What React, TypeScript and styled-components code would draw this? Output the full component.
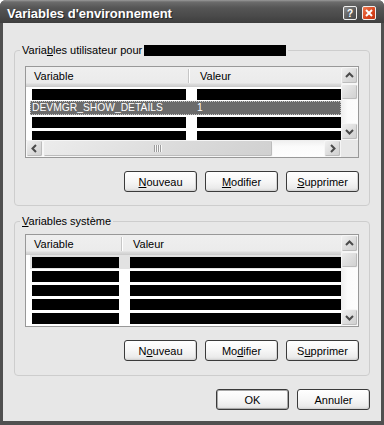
import React, { FC } from 'react';
import styled, { createGlobalStyle } from 'styled-components';

const GlobalStyle = createGlobalStyle`
    html, body {
        margin: 0;
        padding: 0;
        background: #ffffff;
    }
    body {
        font-family: "Liberation Sans", Arial, sans-serif;
        font-size: 11px;
        color: #000000;
    }
`

const Window = styled.div`
    width: 384px;
    height: 425px;
    display: flex;
    flex-direction: column;
    border-radius: 6px 6px 0 0;
    overflow: hidden;
    background: #4f4f4f;
`

const TitleBar = styled.div`
    height: 23px;
    box-sizing: border-box;
    padding: 3px 8px 0 7px;
    display: flex;
    align-items: center;
    gap: 5px;
    background: linear-gradient(to bottom, #9a9a9a 0, #6c6c6c 2px, #555555 8px, #4a4a4a 16px, #3e3e3e 23px);
`

const Title = styled.div`
    flex: 1;
    color: #ffffff;
    font-weight: bold;
    font-size: 13px;
    text-shadow: 1px 1px 0 #262626;
`

const CaptionButton = styled.div<{ $close?: boolean }>`
    width: 14px;
    height: 14px;
    box-sizing: border-box;
    border: 1px solid #f0f0f0;
    border-radius: 2px;
    display: flex;
    align-items: center;
    justify-content: center;
    color: #ffffff;
    font-weight: bold;
    font-size: 10px;
    background: ${p => p.$close
        ? 'linear-gradient(135deg, #f07a50, #d8431c 60%, #c23512)'
        : 'linear-gradient(135deg, #8a8a8a, #5a5a5a 60%, #4a4a4a)'};
`

const Body = styled.div`
    flex: 1;
    background: #e7e7e7;
    border-style: solid;
    border-color: #505050;
    border-width: 0 3px 4px 3px;
    padding-top: 21px;
    display: flex;
    flex-direction: column;
`

const Group = styled.fieldset<{ $top: number; $bottom: number }>`
    margin: 0 11px;
    padding: ${p => p.$top}px 10px ${p => p.$bottom}px 10px;
    border: 1px solid #cdcdcd;
    border-radius: 4px;
    min-width: 0;
    & + & {
        margin-top: 9px;
    }
`

const Legend = styled.legend`
    padding: 0 2px;
    margin-left: -5px;
    height: 13px;
    line-height: 13px;
    white-space: nowrap;
    color: #000000;
`

const Redacted = styled.span`
    display: inline-block;
    width: 142px;
    height: 11px;
    margin-left: 2px;
    vertical-align: -2px;
    background: #000000;
`

const ListView = styled.div<{ $h: number; $hscroll?: boolean }>`
    height: ${p => p.$h}px;
    box-sizing: border-box;
    border: 1px solid #989898;
    background: #ffffff;
    display: grid;
    grid-template-columns: minmax(0, 1fr) 17px;
    grid-template-rows: ${p => p.$hscroll ? 'minmax(0, 1fr) 17px' : 'minmax(0, 1fr)'};
    overflow: hidden;
`

const ListContent = styled.div`
    display: flex;
    flex-direction: column;
    overflow: hidden;
    min-width: 0;
`

const Header = styled.div`
    height: 20px;
    flex-shrink: 0;
    display: flex;
    box-sizing: border-box;
    background: linear-gradient(to bottom, #efefef 0, #ebebeb 16px, #dcdcdc 17px, #d2d2d2 19px, #c8c8c8 20px);
`

const HeaderCell = styled.div<{ $w?: number }>`
    ${p => p.$w ? `width: ${p.$w}px;` : 'flex: 1;'}
    flex-shrink: 0;
    box-sizing: border-box;
    display: flex;
    align-items: center;
    justify-content: space-between;
    padding-left: ${p => p.$w ? 8 : 10}px;
    padding-bottom: 2px;
`

const HeaderSep = styled.span`
    width: 1px;
    height: 14px;
    background: #c6c6c6;
    box-shadow: 1px 0 0 #ffffff;
    margin-right: 1px;
`

const Row = styled.div<{ $sel?: boolean; $inactive?: boolean }>`
    height: 14px;
    flex-shrink: 0;
    display: flex;
    line-height: 14px;
    white-space: nowrap;
    ${p => p.$sel && `
        margin-left: 4px;
        background: #6b6b6b;
        color: #ffffff;
        outline: 1px dotted #c8c8c8;
        outline-offset: -1px;
    `}
    ${p => p.$inactive && `
        margin-left: 4px;
        background: #e2e2e2;
    `}
`

const Cell = styled.div<{ $w?: number; $pad: number }>`
    ${p => p.$w ? `width: ${p.$w}px;` : 'flex: 1;'}
    flex-shrink: 0;
    box-sizing: border-box;
    padding: 2px ${p => p.$w ? 4 : 0}px 1px ${p => p.$pad}px;
`

const TextCell = styled.div<{ $w?: number; $pad: number }>`
    ${p => p.$w ? `width: ${p.$w}px;` : 'flex: 1;'}
    flex-shrink: 0;
    box-sizing: border-box;
    padding-left: ${p => p.$pad}px;
    font-size: 10.3px;
`

const Bar = styled.div`
    height: 11px;
    background: #000000;
`

const VScroll = styled.div`
    display: flex;
    flex-direction: column;
    background: linear-gradient(to right, #eeeeee, #fbfbfb 40%, #fdfdfd);
`

const HScroll = styled.div`
    display: flex;
    background: linear-gradient(to bottom, #eeeeee, #fbfbfb 40%, #fdfdfd);
`

const ScrollButton = styled.div`
    width: 17px;
    height: 17px;
    flex-shrink: 0;
    box-sizing: border-box;
    border: 1px solid #f6f6f6;
    border-radius: 2px;
    background: linear-gradient(135deg, #f0f0f0, #dadada 60%, #cfcfcf);
    box-shadow: inset -1px -1px 0 #bcbcbc;
    display: flex;
    align-items: center;
    justify-content: center;
`

const Thumb = styled.div<{ $len: number; $horizontal?: boolean }>`
    ${p => p.$horizontal ? `width: ${p.$len}px; height: 17px;` : `height: ${p.$len}px; width: 17px;`}
    flex-shrink: 0;
    box-sizing: border-box;
    border: 1px solid #f6f6f6;
    border-radius: 2px;
    background: linear-gradient(135deg, #ececec, #dadada 60%, #d0d0d0);
    box-shadow: inset -1px -1px 0 #bcbcbc;
    display: flex;
    align-items: center;
    justify-content: center;
`

const Grip = styled.span`
    width: 8px;
    height: 7px;
    background: repeating-linear-gradient(to right, #9c9c9c 0 1px, #f8f8f8 1px 2px);
`

const Track = styled.div`
    flex: 1;
`

const Corner = styled.div`
    background: #e7e7e7;
`

const ButtonRow = styled.div`
    display: flex;
    justify-content: flex-end;
    gap: 8px;
    margin-top: 13px;
`

const DialogButtons = styled(ButtonRow)`
    margin: 13px 11px 0 11px;
`

const Button = styled.button<{ $default?: boolean }>`
    width: 73px;
    height: 21px;
    box-sizing: border-box;
    padding: 0;
    border: 1px solid #3a3a3a;
    border-radius: 3px;
    background: linear-gradient(to bottom, #ffffff 0, #f6f6f6 50%, #ebebeb 85%, #d8d8d8 100%);
    box-shadow: ${p => p.$default ? 'inset 0 0 0 1px #a8a8a8' : 'inset -1px -1px 0 #d4d4d4'};
    font-family: "Liberation Sans", Arial, sans-serif;
    font-size: 11px;
    color: #000000;
    u {
        text-underline-offset: 1px;
    }
`

type Dir = 'up' | 'down' | 'left' | 'right';

const Arrow: FC<{ dir: Dir }> = ({ dir }) => {
    const pts: Record<Dir, string> = {
        up: '1,6 4.5,2.5 8,6',
        down: '1,3 4.5,6.5 8,3',
        left: '6,1 2.5,4.5 6,8',
        right: '3,1 6.5,4.5 3,8',
    };
    return (
        <svg width="9" height="9" viewBox="0 0 9 9">
            <polyline points={pts[dir]} fill="none" stroke="#4a4a4a" strokeWidth="2" />
        </svg>
    );
}

type RowData = { kind: 'bars' } | { kind: 'selected'; name: string; value: string } | { kind: 'inactive' };

interface ListProps {
    height: number;
    colWidth: number;
    rows: RowData[];
    hscroll?: boolean;
}

const EnvList: FC<ListProps> = ({ height, colWidth, rows, hscroll }) => (
    <ListView $h={height} $hscroll={hscroll}>
        <ListContent>
            <Header>
                <HeaderCell $w={colWidth}>Variable<HeaderSep /></HeaderCell>
                <HeaderCell>Valeur</HeaderCell>
            </Header>
            {rows.map((r, i) => {
                if (r.kind === 'selected') {
                    return (
                        <Row key={i} $sel>
                            <TextCell $w={colWidth - 4} $pad={2}>{r.name}</TextCell>
                            <TextCell $pad={7}>{r.value}</TextCell>
                        </Row>
                    );
                }
                const inactive = r.kind === 'inactive';
                return (
                    <Row key={i} $inactive={inactive}>
                        <Cell $w={inactive ? colWidth - 4 : colWidth} $pad={inactive ? 2 : 6}><Bar /></Cell>
                        <Cell $pad={7}><Bar /></Cell>
                    </Row>
                );
            })}
        </ListContent>
        <VScroll>
            <ScrollButton><Arrow dir="up" /></ScrollButton>
            <Thumb $len={16} />
            <Track />
            <ScrollButton><Arrow dir="down" /></ScrollButton>
        </VScroll>
        {hscroll && (
            <>
                <HScroll>
                    <ScrollButton><Arrow dir="left" /></ScrollButton>
                    <Thumb $len={230} $horizontal><Grip /></Thumb>
                    <Track />
                    <ScrollButton><Arrow dir="right" /></ScrollButton>
                </HScroll>
                <Corner />
            </>
        )}
    </ListView>
)

const userRows: RowData[] = [
    { kind: 'bars' },
    { kind: 'selected', name: 'DEVMGR_SHOW_DETAILS', value: '1' },
    { kind: 'bars' },
    { kind: 'bars' },
];

const systemRows: RowData[] = [
    { kind: 'inactive' },
    { kind: 'bars' },
    { kind: 'bars' },
    { kind: 'bars' },
    { kind: 'bars' },
    { kind: 'bars' },
];

const App: FC = () => (
    <>
        <GlobalStyle />
        <Window>
            <TitleBar>
                <Title>Variables d'environnement</Title>
                <CaptionButton>?</CaptionButton>
                <CaptionButton $close>
                    <svg width="8" height="8" viewBox="0 0 8 8">
                        <path d="M1 1 L7 7 M7 1 L1 7" stroke="#ffffff" strokeWidth="2" />
                    </svg>
                </CaptionButton>
            </TitleBar>
            <Body>
                <Group $top={9} $bottom={13}>
                    <Legend>Varia<u>b</u>les utilisateur pour<Redacted /></Legend>
                    <EnvList height={92} colWidth={164} rows={userRows} hscroll />
                    <ButtonRow>
                        <Button><u>N</u>ouveau</Button>
                        <Button><u>M</u>odifier</Button>
                        <Button><u>S</u>upprimer</Button>
                    </ButtonRow>
                </Group>
                <Group $top={6} $bottom={14}>
                    <Legend><u>V</u>ariables système</Legend>
                    <EnvList height={93} colWidth={97} rows={systemRows} />
                    <ButtonRow>
                        <Button>N<u>o</u>uveau</Button>
                        <Button>Mo<u>d</u>ifier</Button>
                        <Button>S<u>u</u>pprimer</Button>
                    </ButtonRow>
                </Group>
                <DialogButtons>
                    <Button $default>OK</Button>
                    <Button>Annuler</Button>
                </DialogButtons>
            </Body>
        </Window>
    </>
)

export default App;
